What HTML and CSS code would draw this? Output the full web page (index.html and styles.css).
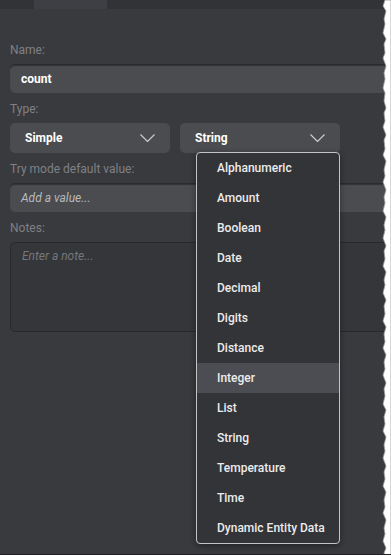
FILE: index.html
```html
<!DOCTYPE html>
<html lang="en">
<head>
  <meta charset="UTF-8" />
  <meta name="viewport" content="width=device-width, initial-scale=1.0"/>
  <title>Variable</title>
  <link rel="stylesheet" href="styles.css">
</head>
<body>
  <div class="app">
    <div class="tabs">
      <div class="tab active"></div>
    </div>

    <div class="form">
      <label class="field-label">Name:</label>
      <div class="input">count</div>

      <label class="field-label">Type:</label>
      <div class="select-row">
        <div class="select">
          <span>Simple</span>
          <svg class="chev" width="15" height="8" viewBox="0 0 15 8"><polyline points="0.5,0.5 7.5,7.5 14.5,0.5" /></svg>
        </div>
        <div class="select">
          <span>String</span>
          <svg class="chev" width="15" height="8" viewBox="0 0 15 8"><polyline points="0.5,0.5 7.5,7.5 14.5,0.5" /></svg>
        </div>
      </div>

      <label class="field-label">Try mode default value:</label>
      <div class="input placeholder">Add a value...</div>

      <label class="field-label">Notes:</label>
      <div class="textarea">Enter a note...</div>
    </div>

    <ul class="dropdown">
      <li>Alphanumeric</li>
      <li>Amount</li>
      <li>Boolean</li>
      <li>Date</li>
      <li>Decimal</li>
      <li>Digits</li>
      <li>Distance</li>
      <li class="hover">Integer</li>
      <li>List</li>
      <li>String</li>
      <li>Temperature</li>
      <li>Time</li>
      <li>Dynamic Entity Data</li>
    </ul>

    <!-- torn screenshot edge -->
    <svg class="torn" width="10" height="557" viewBox="0 0 10 557">
      <polygon fill="#ffffff" stroke="#9a9a9a" stroke-width="0.8"
        points="4,0 2,6 5,11 3,19 4,24 2,33 5,39 3,44 4,53 2,58 5,66 3,73 4,79 2,88 4,93 3,101 5,108 3,113 4,121 2,127 5,135 3,140 4,149 2,155 5,161 3,170 4,176 2,182 5,190 3,197 4,203 2,211 5,217 3,225 4,230 2,238 5,246 3,251 4,259 2,266 5,272 3,280 4,285 2,293 5,300 3,306 4,314 2,321 5,327 3,334 4,342 2,348 5,355 3,362 4,369 2,375 5,383 3,389 4,396 2,404 5,410 3,417 4,424 2,431 5,437 3,445 4,451 2,458 5,466 3,472 4,479 2,486 5,492 3,500 4,507 2,513 5,520 3,528 4,534 2,541 5,548 3,553 4,557 10,557 10,0" />
    </svg>
  </div>
</body>
</html>
```

FILE: styles.css
```css
body {
  margin: 0;
  background: #ffffff;
  font-family: Roboto, "Liberation Sans", sans-serif;
  overflow: hidden;
}
.app {
  position: relative;
  width: 391px;
  height: 554px;
  background: #393a3e;
  border-bottom: 1px solid #1f2023;
  box-shadow: 0 1px 2px rgba(0,0,0,0.25);
  overflow: hidden;
}
.tabs {
  height: 9px;
  background: #323337;
  display: flex;
  padding-left: 34px;
}
.tab.active {
  width: 73px;
  background: #3e3f44;
}
.form {
  padding: 34px 0 0 10px;
  width: 400px;
}
.field-label {
  display: block;
  font-size: 12px;
  line-height: 14px;
  color: #7f8085;
  margin-bottom: 7px;
}
.input {
  height: 29px;
  box-sizing: border-box;
  background: #4a4c50;
  border-radius: 5px;
  border-top: 1px solid #2a2b2e;
  box-shadow: inset 0 1px 1px rgba(0,0,0,0.35);
  padding: 0 11px;
  line-height: 28px;
  font-size: 12px;
  font-weight: 700;
  color: #ffffff;
  margin-bottom: 9px;
}
.input.placeholder {
  font-style: italic;
  font-weight: 400;
  color: #b9babd;
}
.select-row {
  display: flex;
  gap: 10px;
  margin-bottom: 9px;
}
.select {
  width: 160px;
  height: 30px;
  box-sizing: border-box;
  background: #4a4c50;
  border-radius: 5px;
  display: flex;
  align-items: center;
  justify-content: space-between;
  padding: 0 15px;
  font-size: 12px;
  font-weight: 700;
  color: #ffffff;
}
.chev polyline {
  fill: none;
  stroke: #c9cacc;
  stroke-width: 1.2;
}
.textarea {
  width: 390px;
  height: 90px;
  box-sizing: border-box;
  background: #35363a;
  border: 1px solid #28292c;
  border-radius: 5px;
  padding: 6px 11px;
  font-size: 12px;
  font-style: italic;
  color: #76777b;
}
.dropdown {
  position: absolute;
  left: 196px;
  top: 152px;
  width: 144px;
  box-sizing: border-box;
  margin: 0;
  padding: 0;
  list-style: none;
  background: #333438;
  border: 1px solid #c4c4c6;
  border-radius: 4px;
  box-shadow: 0 2px 6px rgba(0,0,0,0.4);
}
.dropdown li {
  height: 30px;
  line-height: 30px;
  padding-left: 20px;
  font-size: 12px;
  font-weight: 500;
  color: #ececec;
  white-space: nowrap;
}
.dropdown li.hover {
  background: #4b4d52;
}
.torn {
  position: absolute;
  right: 0;
  top: 0;
}
```
